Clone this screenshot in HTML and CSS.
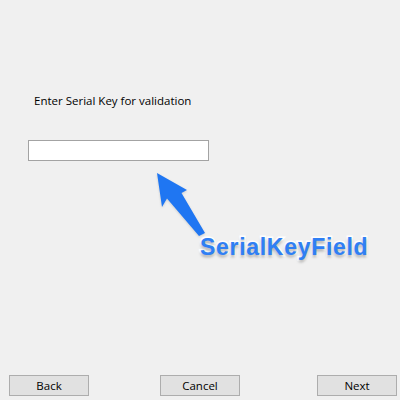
FILE: index.html
```html
<!DOCTYPE html>
<html>
<head>
<meta charset="utf-8">
<link rel="stylesheet" href="styles.css">
</head>
<body>
<div class="window">
  <div class="content">
    <div class="prompt">Enter Serial Key for validation</div>
    <input class="serial" type="text">
  </div>
  <div class="buttons">
    <button class="btn">Back</button>
    <button class="btn btn-cancel">Cancel</button>
    <button class="btn btn-next">Next</button>
  </div>
  <svg class="arrow" width="60" height="70" viewBox="150 170 60 70">
    <path d="M157 173 L187 190 L181.5 193 L205 233 L199 236 L167 198.5 L162 207 Z" fill="#1f76f2"/>
  </svg>
  <div class="callout">SerialKeyField</div>
</div>
</body>
</html>
```
FILE: styles.css
```css
html, body {
  margin: 0;
  padding: 0;
  background: #f0f0f0;
}
.window {
  position: relative;
  width: 400px;
  height: 400px;
  display: flex;
  flex-direction: column;
  justify-content: space-between;
  box-sizing: border-box;
  padding: 0 0 4px 0;
  font-family: "Open Sans", "Noto Sans", sans-serif;
  color: #000;
}
.content {
  display: flex;
  flex-direction: column;
  align-items: flex-start;
  padding: 93px 0 0 28px;
}
.prompt {
  font-size: 11.5px;
  line-height: 16px;
  margin-left: 6px;
}
.serial {
  margin-top: 31px;
  width: 181px;
  height: 21px;
  box-sizing: border-box;
  border: 1px solid #a3a3a3;
  background: #fff;
  padding: 0;
  outline: none;
}
.buttons {
  display: flex;
  padding: 0 3px 0 9px;
}
.btn {
  width: 80px;
  height: 21px;
  box-sizing: border-box;
  border: 1px solid #adadad;
  background: #e1e1e1;
  font-family: "Open Sans", "Noto Sans", sans-serif;
  font-size: 11.5px;
  color: #000;
  padding: 0;
  line-height: 19px;
}
.btn-cancel {
  margin-left: 71px;
}
.btn-next {
  margin-left: auto;
}
.arrow {
  position: absolute;
  left: 150px;
  top: 170px;
  filter: drop-shadow(0 1px 1px rgba(0,0,0,0.15));
}
.callout {
  position: absolute;
  left: 200px;
  top: 235px;
  font-family: "Liberation Sans", Arial, sans-serif;
  font-weight: bold;
  font-size: 23px;
  line-height: 24px;
  letter-spacing: 0.7px;
  color: #2f7ff4;
  -webkit-text-stroke: 3px #fff;
  paint-order: stroke fill;
  text-shadow: 0 2px 3px rgba(0,0,0,0.35);
}
```
